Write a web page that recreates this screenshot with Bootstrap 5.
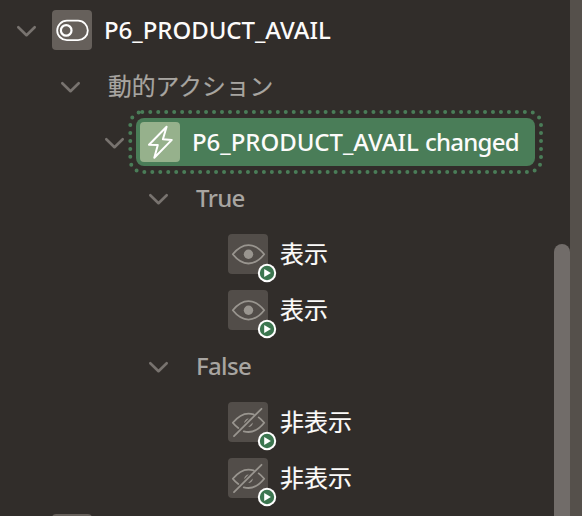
<!DOCTYPE html>
<html lang="ja">
<head>
<meta charset="utf-8">
<meta name="viewport" content="width=device-width, initial-scale=1">
<title>Page Designer</title>
<link href="https://cdn.jsdelivr.net/npm/bootstrap@5.3.0/dist/css/bootstrap.min.css" rel="stylesheet">
<style>
body{background:#312d2a;color:#fcfbfa;font-family:"Noto Sans","Noto Sans CJK JP",sans-serif;font-size:24px;line-height:1}
.app{height:516px}
.tree{padding-top:2px}
.node{height:56px}
.lv0{padding-left:16px}.lv1{padding-left:60px}.lv2{padding-left:104px}.lv3{padding-left:148px}.lv4{padding-left:228px}
.chev{width:21px;height:21px;fill:none;stroke:#78736f;stroke-width:2.6;stroke-linecap:round;stroke-linejoin:round}
.tile{width:40px;height:40px;border-radius:4px;background:#66605b}
.chev+.tile{margin-left:15px}
.tile-dim{background:#524d49}
.tile-event{background:#96b18c}
.tile>svg{width:40px;height:40px;display:block;fill:none;stroke:#fff;stroke-width:1.8;stroke-linejoin:round;stroke-linecap:round}
.tile-dim>svg{stroke:#99958f}
.tile>.run{left:29px;top:29px;width:20px;height:20px;stroke:none}
.lbl{margin-left:12px;font-weight:500}
.t-item{letter-spacing:-.04px}
.t-verb{letter-spacing:-.76px}
.t-ja{font-family:"Noto Sans CJK JP",sans-serif;font-weight:400;padding-bottom:2px;-webkit-text-stroke:.2px currentColor}
.muted{color:#a8a5a1;margin-left:27px}
.muted.t-ja{font-size:23.8px}
.t-group{letter-spacing:-.65px}
.picked{width:399px;height:48px;margin-left:11px;border-radius:8px;background:#4a7d58;padding-left:4px}
.dots{left:-8px;top:-8px;width:415px;height:64px;overflow:visible;fill:none;stroke:#4a7d58;stroke-width:4;stroke-linecap:round;stroke-dasharray:0 7.97}
.track{width:16px;padding-top:244px}
.thumb{border-radius:8px 8px 0 0;background:#716c69}
.edge{width:12px;background:#55504b}
</style>
<script src="https://cdn.jsdelivr.net/npm/bootstrap@5.3.0/dist/js/bootstrap.bundle.min.js"></script>
</head>
<body class="overflow-hidden">
<svg class="d-none">
<symbol id="chev" viewBox="0 0 21 21"><path d="M2.3 7.2l8.2 8 8.2-8"/></symbol>
<symbol id="eye" viewBox="0 0 40 40"><path d="M4.8 20.3C14.500 8 26.500 8 36.200 20.300C26.500 32.600 14.500 32.600 4.800 20.300Z"/><circle cx="20.500" cy="20.300" r="4.700" fill="#99958f" stroke="none"/></symbol>
<symbol id="hide" viewBox="0 0 40 40"><path d="M10.300 26Q7.200 23.800 4.800 20.800Q14.500 8.800 25.500 12.400M30.700 15.400Q33.700 17.700 36.200 20.800Q26.800 32.600 15.800 29.300M6 34.200L33.500 6.800"/><path d="M16.200 21.300A4.500 4.500 0 0 1 20.800 16.600ZM24.800 20.400A4.500 4.500 0 0 1 20.200 25.100Z" fill="#99958f" stroke="none"/></symbol>
<symbol id="run" viewBox="0 0 20 20"><circle cx="10" cy="10" r="9.200" fill="#fff"/><circle cx="10" cy="10" r="7.200" fill="#3c7650"/><path d="M7.200 6L13.900 10L7.200 14Z" fill="#fff"/></symbol>
</svg>
<div class="app d-flex overflow-hidden">
<main class="tree flex-grow-1">
<div class="node lv0 d-flex align-items-center"><svg class="chev"><use href="#chev"/></svg><div class="tile"><svg viewBox="0 0 40 40"><rect x="5.200" y="10.700" width="30.600" height="19.400" rx="9.700"/><circle cx="14.200" cy="20.400" r="5.300" stroke-width="2.200"/></svg></div><span class="lbl t-item text-nowrap">P6_PRODUCT_AVAIL</span></div>
<div class="node lv1 d-flex align-items-center"><svg class="chev"><use href="#chev"/></svg><span class="lbl muted t-ja">動的アクション</span></div>
<div class="node lv2 d-flex align-items-center"><svg class="chev"><use href="#chev"/></svg><div class="picked position-relative d-flex align-items-center"><svg class="dots position-absolute"><rect x="2.300" y="2" width="410.700" height="60" rx="12"/></svg><div class="tile tile-event"><svg viewBox="0 0 40 40"><path d="M26.600 4.800L9 22.700L17.800 23L14.300 35.700L31.800 17.900L22.900 17.300Z" stroke-width="2"/></svg></div><span class="lbl t-item text-nowrap">P6_PRODUCT_AVAIL <span class="t-verb">changed</span></span></div></div>
<div class="node lv3 d-flex align-items-center"><svg class="chev"><use href="#chev"/></svg><span class="lbl muted t-group">True</span></div>
<div class="node lv4 d-flex align-items-center"><div class="tile tile-dim position-relative"><svg><use href="#eye"/></svg><svg class="run position-absolute"><use href="#run"/></svg></div><span class="lbl t-ja">表示</span></div>
<div class="node lv4 d-flex align-items-center"><div class="tile tile-dim position-relative"><svg><use href="#eye"/></svg><svg class="run position-absolute"><use href="#run"/></svg></div><span class="lbl t-ja">表示</span></div>
<div class="node lv3 d-flex align-items-center"><svg class="chev"><use href="#chev"/></svg><span class="lbl muted t-group">False</span></div>
<div class="node lv4 d-flex align-items-center"><div class="tile tile-dim position-relative"><svg><use href="#hide"/></svg><svg class="run position-absolute"><use href="#run"/></svg></div><span class="lbl t-ja">非表示</span></div>
<div class="node lv4 d-flex align-items-center"><div class="tile tile-dim position-relative"><svg><use href="#hide"/></svg><svg class="run position-absolute"><use href="#run"/></svg></div><span class="lbl t-ja">非表示</span></div>
<div class="node lv0 d-flex align-items-center"><svg class="chev"></svg><div class="tile"></div></div>
</main>
<div class="track d-flex"><div class="thumb flex-grow-1"></div></div>
<div class="edge"></div>
</div>
</body>
</html>
